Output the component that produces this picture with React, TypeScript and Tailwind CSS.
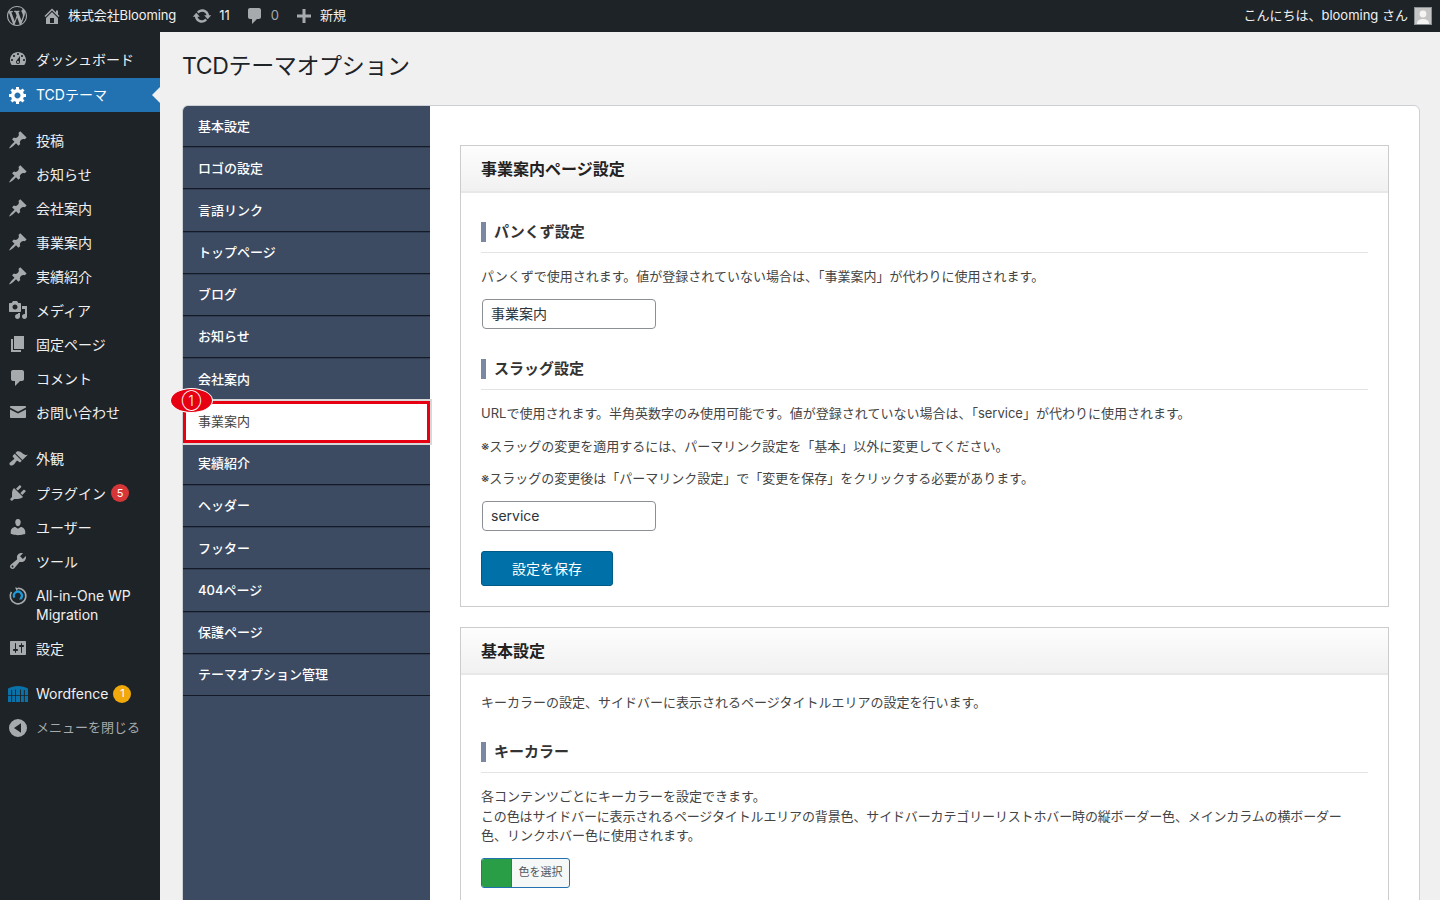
import type { ReactNode } from "react";

const icons: Record<string, string> = {
  dashboard:
    "M3.76 16h12.48c1.1-1.37 1.76-3.11 1.76-5 0-4.42-3.58-8-8-8s-8 3.58-8 8c0 1.89.66 3.63 1.76 5zM10 4c.55 0 1 .45 1 1s-.45 1-1 1-1-.45-1-1 .45-1 1-1zM6 6c.55 0 1 .45 1 1s-.45 1-1 1-1-.45-1-1 .45-1 1-1zm8 0c.55 0 1 .45 1 1s-.45 1-1 1-1-.45-1-1 .45-1 1-1zm-5.37 5.55L12 7v6c0 1.1-.9 2-2 2s-2-.9-2-2c0-.57.24-1.08.63-1.45zM4 10c.55 0 1 .45 1 1s-.45 1-1 1-1-.45-1-1 .45-1 1-1zm12 0c.55 0 1 .45 1 1s-.45 1-1 1-1-.45-1-1 .45-1 1-1zm-5 3c0-.55-.45-1-1-1s-1 .45-1 1 .45 1 1 1 1-.45 1-1z",
  gear:
    "M18 12h-2.18c-.17.7-.44 1.35-.81 1.93l1.54 1.54-2.1 2.1-1.54-1.54c-.58.36-1.23.63-1.91.79V19H8v-2.18c-.68-.16-1.33-.43-1.91-.79l-1.54 1.54-2.12-2.12 1.54-1.54c-.36-.58-.63-1.23-.79-1.91H1V9.03h2.17c.16-.7.44-1.35.8-1.94L2.43 5.55l2.1-2.1 1.54 1.54c.58-.37 1.24-.64 1.93-.81V2h3v2.18c.68.16 1.33.43 1.91.79l1.54-1.54 2.12 2.12-1.54 1.54c.36.59.64 1.24.8 1.94H18V12zm-8.5 1.5c1.66 0 3-1.34 3-3s-1.34-3-3-3-3 1.34-3 3 1.34 3 3 3z",
  pin:
    "M10.44 3.02l1.82-1.82 6.36 6.35-1.83 1.82c-1.05-.68-2.48-.57-3.41.36l-.75.75c-.92.93-1.04 2.35-.35 3.41l-1.83 1.82-2.41-2.41-2.8 2.79c-.42.42-3.38 2.71-3.8 2.29s1.86-3.39 2.28-3.81l2.79-2.79L4.1 9.36l1.83-1.82c1.05.69 2.48.57 3.4-.36l.75-.75c.93-.92 1.05-2.35.36-3.41z",
  media:
    "M13 11V4c0-.55-.45-1-1-1h-1.67L9 1H5L3.67 3H2c-.55 0-1 .45-1 1v7c0 .55.45 1 1 1h10c.55 0 1-.45 1-1zM7 4.5c1.38 0 2.5 1.12 2.5 2.5S8.38 9.5 7 9.5 4.5 8.38 4.5 7 5.62 4.5 7 4.5zM14 6h5v10.5c0 1.38-1.12 2.5-2.5 2.5S14 17.88 14 16.5s1.12-2.5 2.5-2.5c.17 0 .34.02.5.05V9h-3V6zm-4 8.05V13h2v3.5c0 1.38-1.12 2.5-2.5 2.5S7 17.88 7 16.5 8.12 14 9.5 14c.17 0 .34.02.5.05z",
  page: "M6 15V2h10v13H6zm-1 1h8v2H3V5h2v11z",
  comment:
    "M5 2h9c1.1 0 2 .9 2 2v7c0 1.1-.9 2-2 2h-2l-5 5v-5H5c-1.1 0-2-.9-2-2V4c0-1.1.9-2 2-2z",
  mail:
    "M3 4h14c.6 0 1 .4 1 1v.6l-8 4.2-8-4.2V5c0-.6.4-1 1-1zM2 7.4l8 4.2 8-4.2V15c0 .6-.4 1-1 1H3c-.6 0-1-.4-1-1V7.4z",
  appearance:
    "M14.48 11.06L7.41 3.99l1.5-1.5c.5-.56 2.3-.47 3.51.32 1.21.8 1.43 1.28 2.91 2.1 1.18.64 2.45 1.26 4.45.85zm-.71.71L6.7 4.7 4.93 6.47c-.39.39-.39 1.02 0 1.41l1.06 1.06c.39.39.39 1.03 0 1.42-.6.6-1.43 1.11-2.21 1.69-.35.26-.7.53-1.01.84C1.43 13.23.96 15.06 2 16c1.04 1 2.77.57 4.11-.77.31-.31.58-.66.84-1.01.58-.78 1.09-1.61 1.69-2.21.39-.39 1.02-.39 1.41 0l1.06 1.06c.39.39 1.02.39 1.41 0z",
  plugin:
    "M13.11 4.36L9.87 7.6 8 5.73l3.24-3.24c.35-.34 1.05-.2 1.56.32.52.51.66 1.21.31 1.55zm-8 1.77l.91-1.12 9.01 9.01-1.19.84c-.71.71-2.63 1.16-3.82 1.16H6.14L4.9 17.26c-.59.59-1.54.59-2.12 0-.59-.58-.59-1.53 0-2.12l1.24-1.24v-3.88c0-1.13.4-3.19 1.09-3.89zm7.26 3.97l3.24-3.24c.34-.35 1.04-.21 1.55.31.52.51.66 1.21.31 1.55l-3.24 3.25z",
  user:
    "M10 9.25c-2.27 0-2.73-3.44-2.73-3.44C7 4.02 7.82 2 9.97 2c2.16 0 2.98 2.02 2.71 3.81 0 0-.41 3.44-2.68 3.44zm0 2.57L12.72 10c2.39 0 4.52 2.33 4.52 4.53v2.49s-3.65 1.13-7.24 1.13c-3.65 0-7.24-1.13-7.24-1.13v-2.49c0-2.25 1.94-4.48 4.47-4.48z",
  tool:
    "M16.68 9.77c-1.34 1.34-3.3 1.67-4.95.99l-5.41 6.52c-.99.99-2.59.99-3.58 0s-.99-2.59 0-3.57l6.52-5.42c-.68-1.65-.35-3.61.99-4.95 1.28-1.28 3.12-1.62 4.72-1.06l-2.89 2.89 2.82 2.82 2.86-2.87c.53 1.58.18 3.39-1.08 4.65zM3.81 16.21c.4.39 1.04.39 1.43 0 .4-.4.4-1.04 0-1.43-.39-.4-1.03-.4-1.43 0-.39.39-.39 1.03 0 1.43z",
  settings:
    "M18 16V4c0-.55-.45-1-1-1H3c-.55 0-1 .45-1 1v12c0 .55.45 1 1 1h14c.55 0 1-.45 1-1zM8 11h1c.55 0 1 .45 1 1s-.45 1-1 1H8v1.5c0 .28-.22.5-.5.5s-.5-.22-.5-.5V13H6c-.55 0-1-.45-1-1s.45-1 1-1h1V5.5c0-.28.22-.5.5-.5s.5.22.5.5V11zm5-2h-1c-.55 0-1-.45-1-1s.45-1 1-1h1V5.5c0-.28.22-.5.5-.5s.5.22.5.5V7h1c.55 0 1 .45 1 1s-.45 1-1 1h-1v5.5c0 .28-.22.5-.5.5s-.5-.22-.5-.5V9z",
  collapse:
    "M10 1a9 9 0 1 1 0 18 9 9 0 0 1 0-18zm3 4.2L6 10l7 4.8V5.2z",
  home:
    "M16 8.5l1.53 1.53-1.06 1.06L10 4.62l-6.47 6.47-1.06-1.06L10 2.5l4 4v-2h2v4zm-6-2.46l6 5.99V18H4v-5.97zM12 17v-5H8v5h4z",
  update:
    "M10.2 3.28c3.53 0 6.43 2.61 6.92 6h2.08l-3.5 4-3.5-4h2.32c-.45-1.97-2.21-3.45-4.32-3.45-1.45 0-2.73.71-3.54 1.78L4.95 5.66C6.23 4.2 8.11 3.28 10.2 3.28zm-.4 13.44c-3.52 0-6.43-2.61-6.92-6H.8l3.5-4c1.17 1.33 2.33 2.67 3.5 4H5.48c.45 1.97 2.21 3.45 4.32 3.45 1.45 0 2.73-.71 3.54-1.78l1.71 1.95c-1.28 1.46-3.15 2.38-5.25 2.38z",
  plus: "M17 8.5v3h-5.5V17h-3v-5.5H3v-3h5.5V3h3v5.5H17z",
  wp:
    "M20 10c0-5.51-4.49-10-10-10C4.48 0 0 4.49 0 10c0 5.52 4.48 10 10 10 5.51 0 10-4.48 10-10zM7.78 15.37L4.37 6.22c.55-.02 1.17-.08 1.17-.08.5-.06.44-1.13-.06-1.11 0 0-1.45.11-2.37.11-.18 0-.37 0-.58-.01C4.12 2.69 6.87 1.11 10 1.11c2.33 0 4.45.87 6.05 2.34-.68-.11-1.65.39-1.65 1.58 0 .74.45 1.36.9 2.1.35.61.55 1.36.55 2.46 0 1.49-1.4 5-1.4 5l-3.03-8.37c.54-.02.82-.17.82-.17.5-.05.44-1.25-.06-1.22 0 0-1.44.12-2.38.12-.87 0-2.33-.12-2.33-.12-.5-.03-.56 1.2-.06 1.22l.92.08 1.26 3.41zM17.41 10c.24-.64.74-1.87.43-4.25.7 1.29 1.05 2.71 1.05 4.25 0 3.29-1.73 6.24-4.4 7.78.97-2.59 1.94-5.2 2.92-7.78zM6.1 18.09C3.12 16.65 1.11 13.53 1.11 10c0-1.3.23-2.48.72-3.59C3.25 10.3 4.67 14.2 6.1 18.09zm4.03-6.63l2.58 6.98c-.86.29-1.76.45-2.71.45-.79 0-1.57-.11-2.29-.33.81-2.38 1.62-4.74 2.42-7.1z",
};

const Dash = ({ name, className }: { name: string; className: string }) => (
  <svg viewBox="0 0 20 20" className={className} fill="currentColor" fillRule="evenodd">
    <path d={icons[name]} />
  </svg>
);

const MigrationIcon = () => (
  <svg viewBox="0 0 20 20" className="h-5 w-5" fill="none">
    <path d="M10 2.2a7.8 7.8 0 1 1-6.6 3.7" stroke="#a7aaad" strokeWidth="1.6" />
    <path d="M7.2 1.2l3.4 1-2.2 2.8z" fill="#a7aaad" />
    <path d="M6.4 11.6a4 4 0 1 1 6.4.8" stroke="#1e9bd9" strokeWidth="2.2" />
    <path d="M11 13.6l3.4-.4-1-3.2z" fill="#1e9bd9" />
  </svg>
);

const WordfenceIcon = () => (
  <svg viewBox="0 0 20 17" className="h-[17px] w-5">
    <path d="M0 3.5C3 2 6 1 10 1s7 1 10 2.5V17H0z" fill="#0a72a8" />
    <path
      d="M3.2 5h.9v12h-.9zM7 4.4h.9V17H7zM12 4.4h.9V17H12zM15.9 5h.9v12h-.9zM0 10h20v.8H0z"
      fill="#1d2327"
    />
  </svg>
);

type SideItem = {
  icon: ReactNode;
  label: ReactNode;
  badge?: { text: string; color: string };
  cls: string;
};

const sideIcon = (name: string) => <Dash name={name} className="h-5 w-5" />;

const sideItems: SideItem[] = [
  { icon: sideIcon("dashboard"), label: "ダッシュボード", cls: "mt-[10px] h-[34px] items-center" },
  { icon: sideIcon("pin"), label: "投稿", cls: "mt-[47px] h-[34px] items-center" },
  { icon: sideIcon("pin"), label: "お知らせ", cls: "h-[34px] items-center" },
  { icon: sideIcon("pin"), label: "会社案内", cls: "h-[34px] items-center" },
  { icon: sideIcon("pin"), label: "事業案内", cls: "h-[34px] items-center" },
  { icon: sideIcon("pin"), label: "実績紹介", cls: "h-[34px] items-center" },
  { icon: sideIcon("media"), label: "メディア", cls: "h-[34px] items-center" },
  { icon: sideIcon("page"), label: "固定ページ", cls: "h-[34px] items-center" },
  { icon: sideIcon("comment"), label: "コメント", cls: "h-[34px] items-center" },
  { icon: sideIcon("mail"), label: "お問い合わせ", cls: "h-[34px] items-center" },
  { icon: sideIcon("appearance"), label: "外観", cls: "mt-[12px] h-[35px] items-center" },
  {
    icon: sideIcon("plugin"),
    label: "プラグイン",
    badge: { text: "5", color: "bg-[#d63638]" },
    cls: "h-[34px] items-center",
  },
  { icon: sideIcon("user"), label: "ユーザー", cls: "h-[34px] items-center" },
  { icon: sideIcon("tool"), label: "ツール", cls: "h-[34px] items-center" },
  {
    icon: <MigrationIcon />,
    label: <>All-in-One WP<br />Migration</>,
    cls: "h-[53px] items-start pt-[8px]",
  },
  { icon: sideIcon("settings"), label: "設定", cls: "h-[34px] items-center" },
  {
    icon: <WordfenceIcon />,
    label: "Wordfence",
    badge: { text: "1", color: "bg-[#f0a80a]" },
    cls: "mt-[11px] h-[35px] items-center",
  },
];

const tabs = [
  "基本設定",
  "ロゴの設定",
  "言語リンク",
  "トップページ",
  "ブログ",
  "お知らせ",
  "会社案内",
  "事業案内",
  "実績紹介",
  "ヘッダー",
  "フッター",
  "404ページ",
  "保護ページ",
  "テーマオプション管理",
];

const SubHeading = ({ children }: { children: ReactNode }) => (
  <div className="border-b border-[#e3e3e3] pb-[10px]">
    <h3 className="border-l-[5px] border-[#7b88a1] pl-2 text-[15px] font-bold leading-[20px] text-[#333]">
      {children}
    </h3>
  </div>
);

const TextInput = ({ value }: { value: string }) => (
  <div className="ml-px flex h-[30px] w-[174px] items-center rounded border border-[#8c8f94] bg-white pb-[2px] pl-[8px] text-[14px] text-[#2c3338]">
    {value}
  </div>
);

const BoxHeader = ({ children }: { children: ReactNode }) => (
  <div className="flex h-[47px] items-center border-b-2 border-[#e8e8e8] bg-gradient-to-b from-[#fdfdfd] to-[#f1f1f1] pl-5 text-[16px] font-bold text-[#222]">
    {children}
  </div>
);

export default function App() {
  return (
    <div className="relative h-[900px] overflow-hidden bg-[#f0f0f1] font-['Inter','Noto_Sans_CJK_JP',sans-serif] text-[13px]">
      {/* 管理バー */}
      <header className="flex h-8 items-center justify-between bg-[#1d2327] text-[13px] text-[#f0f0f1]">
        <div className="flex items-center">
          <Dash name="wp" className="ml-[7px] h-5 w-5 text-[#a7aaad]" />
          <Dash name="home" className="ml-[15px] h-5 w-5 text-[#a7aaad]" />
          <span className="ml-[6px] tracking-[-0.1px]">株式会社Blooming</span>
          <Dash name="update" className="ml-4 h-5 w-5 text-[#a7aaad]" />
          <span className="ml-[7px]">11</span>
          <Dash name="comment" className="ml-[15px] h-5 w-5 text-[#a7aaad]" />
          <span className="ml-[6px] text-[#a7aaad]">0</span>
          <Dash name="plus" className="ml-[15px] h-5 w-5 text-[#a7aaad]" />
          <span className="ml-[6px]">新規</span>
        </div>
        <div className="mr-[8px] flex items-center">
          <span>こんにちは、blooming さん</span>
          <div className="ml-[6px] flex h-[18px] w-[18px] items-end justify-center overflow-hidden border border-[#8c8f94] bg-[#c4c4c4]">
            <svg viewBox="0 0 16 16" className="h-4 w-4" fill="#f4f4f4">
              <circle cx="8" cy="6" r="3.4" />
              <path d="M2 16c0-3.6 2.6-5 6-5s6 1.4 6 5z" />
            </svg>
          </div>
        </div>
      </header>

      <div className="flex h-[868px]">
        {/* サイドメニュー */}
        <aside className="relative w-40 shrink-0 bg-[#1d2327] text-[14px] text-[#f0f0f1]">
          {sideItems.map((item, i) => (
            <div key={i} className={`flex leading-[19px] ${item.cls}`}>
              <span className="ml-[8px] flex w-5 justify-center text-[#a7aaad]">{item.icon}</span>
              <span className="ml-2">{item.label}</span>
              {item.badge && (
                <span
                  className={`ml-[5px] flex h-[18px] w-[18px] items-center justify-center rounded-full text-[11px] text-white ${item.badge.color}`}
                >
                  {item.badge.text}
                </span>
              )}
            </div>
          ))}
          <div className="flex h-[34px] items-center text-[#a7aaad]">
            <Dash name="collapse" className="ml-[8px] h-5 w-5" />
            <span className="ml-2 text-[13px]">メニューを閉じる</span>
          </div>
          {/* 選択中の項目 */}
          <div className="absolute left-0 top-[46px] flex h-[34px] w-40 items-center bg-[#2271b1] pb-[2px] text-white">
            <Dash name="gear" className="ml-[8px] mt-[2px] h-5 w-5" />
            <span className="ml-2">TCDテーマ</span>
            <span className="absolute right-0 top-[9px] border-y-[8px] border-r-[8px] border-y-transparent border-r-[#f0f0f1]" />
          </div>
        </aside>

        {/* メイン */}
        <main className="min-w-0 flex-1 pl-[22px] pr-[20px]">
          <h1 className="mt-[18px] h-[32px] text-[23px] leading-[32px] tracking-[-0.35px] text-[#1d2327]">
            TCDテーマオプション
          </h1>
          <div className="mt-[23px] flex h-[800px] overflow-hidden rounded-t-[6px] border border-[#ccd0d4] bg-white">
            <nav className="w-[247px] shrink-0 bg-[#3c4a62] text-[13px] font-medium text-white">
              {tabs.map((t, i) => (
                <div
                  key={t}
                  className={
                    t === "事業案内"
                      ? "relative z-10 flex h-[42.23px] items-center border-[3px] border-[#e60012] bg-white pl-[12px] font-normal text-[#444] outline-2 outline-[#d8d8d8]"
                      : `flex items-center border-b border-t border-b-[#141b27] border-t-[#303c52] pl-[15px] ${i === 0 ? "h-[41.2px] border-t-transparent" : "h-[42.23px]"}`
                  }
                >
                  {t}
                </div>
              ))}
            </nav>
            <div className="min-w-0 flex-1 px-[30px] pt-[39px]">
              <section className="border border-[#ccc]">
                <BoxHeader>事業案内ページ設定</BoxHeader>
                <div className="px-5 pb-5 pt-[29px] text-[#444]">
                  <SubHeading>パンくず設定</SubHeading>
                  <p className="mb-[13px] mt-[13px] leading-[20px]">
                    パンくずで使用されます。値が登録されていない場合は、「事業案内」が代わりに使用されます。
                  </p>
                  <TextInput value="事業案内" />
                  <div className="mt-[30px]">
                    <SubHeading>スラッグ設定</SubHeading>
                  </div>
                  <p className="mt-[13px] leading-[20px]">
                    URLで使用されます。半角英数字のみ使用可能です。値が登録されていない場合は、「service」が代わりに使用されます。
                  </p>
                  <p className="mt-[13px] leading-[20px]">
                    ※スラッグの変更を適用するには、パーマリンク設定を「基本」以外に変更してください。
                  </p>
                  <p className="mb-[13px] mt-[12px] leading-[20px]">
                    ※スラッグの変更後は「パーマリンク設定」で「変更を保存」をクリックする必要があります。
                  </p>
                  <TextInput value="service" />
                  <div className="mt-5 flex h-[35px] w-[132px] items-center justify-center rounded-[3px] border border-[#005a87] bg-[#0071a8] text-[14px] text-white">
                    設定を保存
                  </div>
                </div>
              </section>
              <section className="mt-5 border border-[#ccc]">
                <BoxHeader>基本設定</BoxHeader>
                <div className="px-5 pb-10 pt-[17px] text-[#444]">
                  <p className="leading-[20px]">
                    キーカラーの設定、サイドバーに表示されるページタイトルエリアの設定を行います。
                  </p>
                  <div className="mt-[30px]">
                    <SubHeading>キーカラー</SubHeading>
                  </div>
                  <p className="mt-[14px] leading-[19.5px]">
                    各コンテンツごとにキーカラーを設定できます。
                    <br />
                    <span className="tracking-[-0.14px]">
                      この色はサイドバーに表示されるページタイトルエリアの背景色、サイドバーカテゴリーリストホバー時の縦ボーダー色、メインカラムの横ボーダー
                    </span>
                    <br />
                    色、リンクホバー色に使用されます。
                  </p>
                  <div className="mt-[12px] flex h-[30px] w-[89px] overflow-hidden rounded-[3px] border border-[#2271b1] bg-[#f6f7f7]">
                    <span className="w-[30px] border-r border-[#2271b1] bg-[#2a9d47]" />
                    <span className="flex flex-1 items-center justify-center text-[11px] text-[#50575e]">
                      色を選択
                    </span>
                  </div>
                </div>
              </section>
            </div>
          </div>
        </main>
      </div>

      {/* 番号ラベル */}
      <div className="absolute left-[170px] top-[388px] z-20 flex h-[25px] w-[43px] items-center justify-center rounded-[50%] border border-white bg-[#e60012] text-[14px] font-light text-white">
        ①
      </div>
    </div>
  );
}
